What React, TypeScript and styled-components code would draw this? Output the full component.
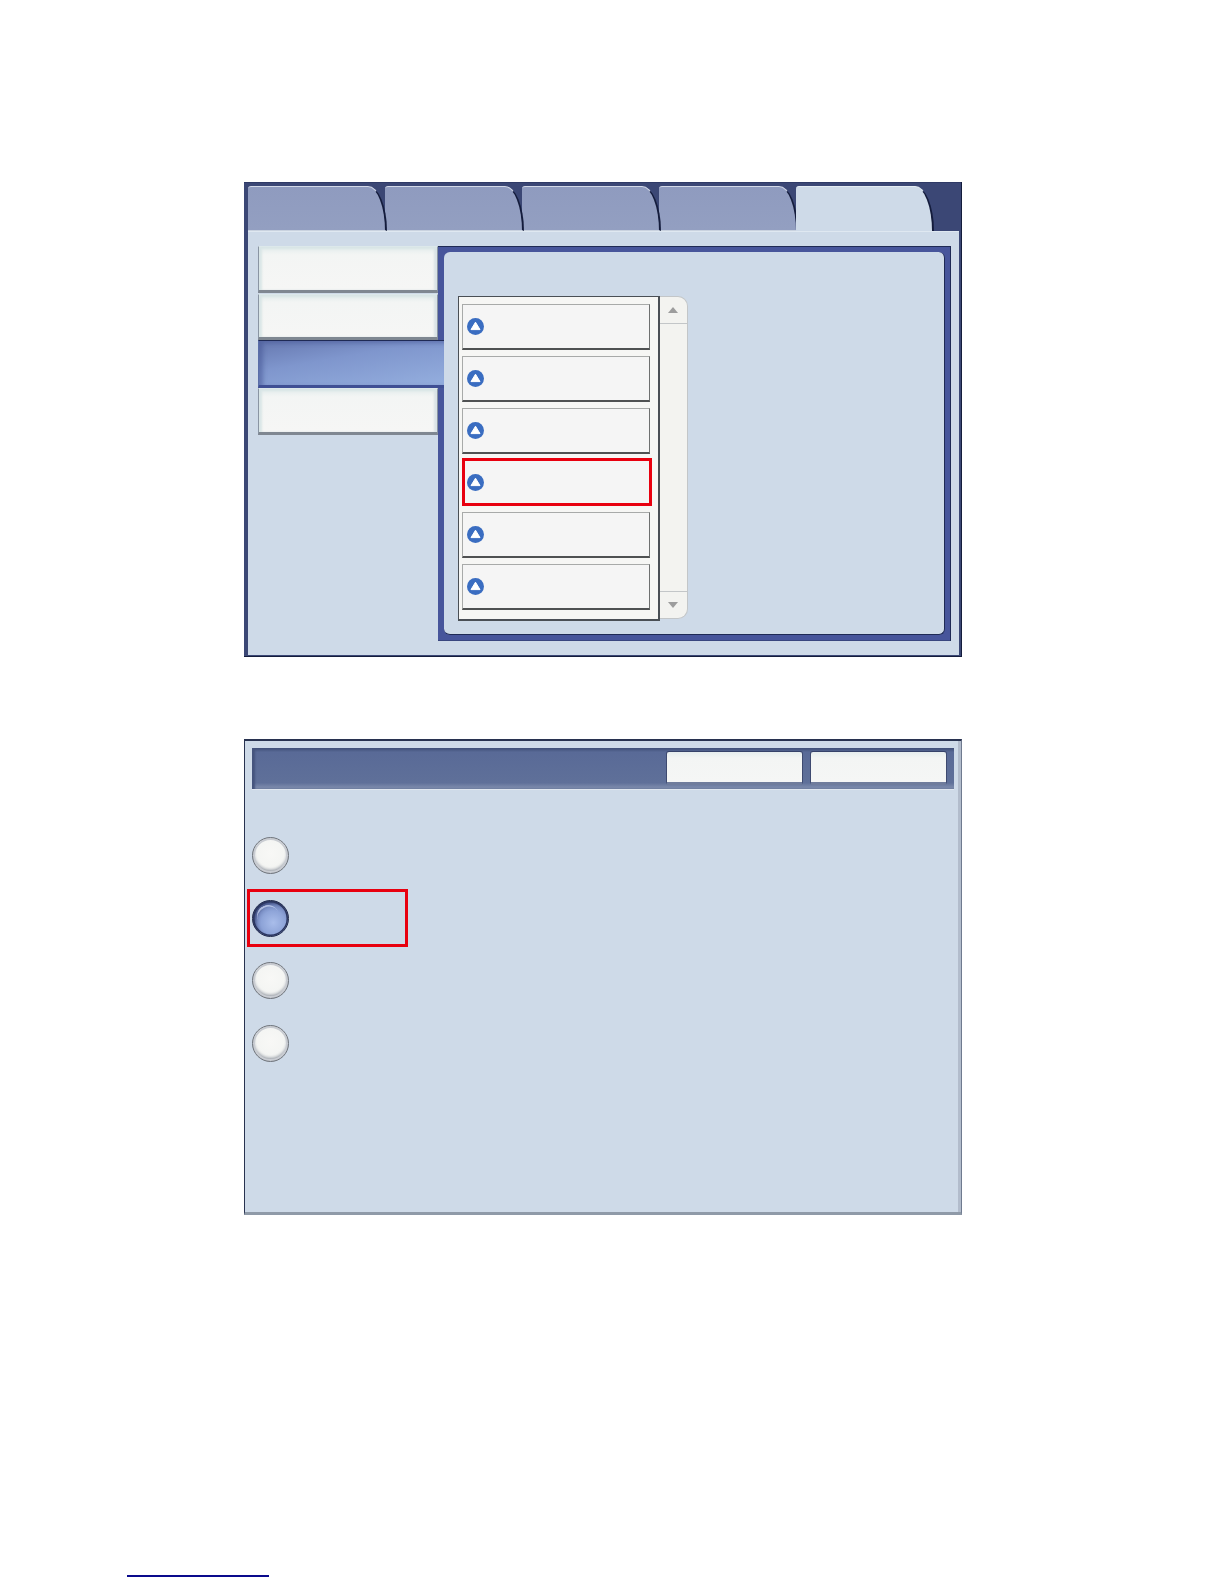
import styled, { createGlobalStyle } from 'styled-components';

const GlobalStyle = createGlobalStyle`
  html, body {
    margin: 0;
    padding: 0;
    background: #fff;
    font-family: "Liberation Sans", Arial, sans-serif;
  }
  *, *::before, *::after {
    box-sizing: border-box;
  }
`;

const Page = styled.div`
  width: 1224px;
  height: 1584px;
  padding-top: 182px;
  overflow: hidden;
`;

const TabbedPanel = styled.section`
  width: 718px;
  height: 475px;
  margin-left: 244px;
  padding: 4px 3px 2px 4px;
  display: flex;
  flex-direction: column;
  background: #3b4775;
  box-shadow: inset 0 -1px 0 #141c3c, inset -1px 0 0 #141c3c, inset 0 1px 0 #2f3a66;
`;

const TabRow = styled.div`
  flex: none;
  height: 45px;
  display: flex;
`;

const Tab = styled.div<{ $active?: boolean; $order: number }>`
  position: relative;
  z-index: ${(props) => props.$order};
  flex: none;
  width: ${(props) => (props.$active ? '138px' : '138.5px')};
  margin-left: ${(props) => (props.$active ? '-0.5px' : '0')};
  margin-right: ${(props) => (props.$active ? '0' : '-1.5px')};
  border-radius: 3px 19px 0 0 / 3px 45px 0 0;
  border-top: 1px solid ${(props) => (props.$active ? '#e4ecf3' : '#d3d9e8')};
  border-right: 2px solid #141c3c;
  border-bottom: ${(props) => (props.$active ? '0' : '1px solid #c9d2df')};
  background: ${(props) =>
    props.$active ? '#cedae8' : 'linear-gradient(#8f9bbf, #939fc1)'};
`;

const TabBody = styled.div`
  flex: 1;
  display: flex;
  padding: 15px 8px 14px 10px;
  background: #cedae8;
  box-shadow: inset 0 1px 0 #dfe8f1;
`;

const SideMenu = styled.div`
  width: 180px;
  display: flex;
  flex-direction: column;
`;

const SideButton = styled.div<{ $selected?: boolean }>`
  position: relative;
  z-index: 1;
  flex: none;
  width: ${(props) => (props.$selected ? '186px' : '180px')};
  height: ${(props) => (props.$selected ? '48px' : '46.5px')};
  margin-top: ${(props) => (props.$selected ? '-1px' : '0')};
  margin-bottom: ${(props) => (props.$selected ? '0' : '1px')};
  border-top: 1px solid ${(props) => (props.$selected ? '#1f2a55' : '#dce8ea')};
  border-left: 1px solid ${(props) => (props.$selected ? '#5a6ea8' : '#8a95a3')};
  border-right: ${(props) => (props.$selected ? '0' : '1px solid #8a95a3')};
  border-bottom: ${(props) => (props.$selected ? '3px solid #3f4f94' : '3px solid #7f8791')};
  background: ${(props) =>
    props.$selected
      ? 'linear-gradient(170deg, #6678b0 0%, #7f96cd 40%, #94aede 100%)'
      : 'linear-gradient(#e3ecec, #f3f5f4 18%, #f6f6f5)'};
  box-shadow: ${(props) =>
    props.$selected
      ? 'inset 4px 2px 4px rgba(70, 85, 150, 0.55)'
      : 'inset 3px 2px 2px rgba(215, 228, 230, 0.9), inset -3px 0 2px rgba(215, 225, 228, 0.9)'};
`;

const ContentPanel = styled.div`
  width: 513px;
  height: 395px;
  padding: 6px;
  background: #47559b;
  box-shadow: inset 0 1px 0 #1f2a55, inset -1px 0 0 #1f2a55, inset 0 -1px 0 #39467f;
`;

const ContentInner = styled.div`
  height: 100%;
  display: flex;
  align-items: flex-start;
  padding: 44px 0 0 14px;
  background: #cedae8;
  border: 1px solid #1f2a55;
  border-width: 0 1px 1px 0;
  border-radius: 6px;
`;

const ScrollList = styled.div`
  width: 201.5px;
  height: 325px;
  padding: 7px 7px 0 3px;
  display: flex;
  flex-direction: column;
  gap: 6px;
  background: #f6f6f4;
  border: 1px solid #4a4f55;
  border-bottom-width: 2px;
  border-right-width: 2px;
`;

const ListItem = styled.div<{ $marked?: boolean }>`
  flex: none;
  display: flex;
  align-items: center;
  width: ${(props) => (props.$marked ? '190px' : '188px')};
  height: ${(props) => (props.$marked ? '48px' : '46px')};
  margin-top: ${(props) => (props.$marked ? '-2px' : '0')};
  padding-left: ${(props) => (props.$marked ? '1.5px' : '3.5px')};
  background: #f5f5f5;
  border-style: solid;
  border-color: ${(props) =>
    props.$marked ? '#e8000f' : '#a8aaa9 #6e7070 #4f5152 #a8aaa9'};
  border-width: ${(props) => (props.$marked ? '3px' : '1px 1px 2px 1px')};
`;

const ScrollTrack = styled.div`
  width: 28px;
  height: 323px;
  display: flex;
  flex-direction: column;
  justify-content: space-between;
  background: #f3f3f0;
  border: 1px solid #c3c6c8;
  border-left: 0;
  border-radius: 0 10px 10px 0;
`;

const ScrollButton = styled.div<{ $down?: boolean }>`
  height: 27px;
  display: flex;
  align-items: center;
  justify-content: center;
  border-top: ${(props) => (props.$down ? '1px solid #c3c6c8' : '0')};
  border-bottom: ${(props) => (props.$down ? '0' : '1px solid #c3c6c8')};
`;

const Arrow = styled.span<{ $down?: boolean }>`
  width: 0;
  height: 0;
  border-left: 5px solid transparent;
  border-right: 5px solid transparent;
  border-bottom: ${(props) => (props.$down ? '0' : '6px solid #9d9d9d')};
  border-top: ${(props) => (props.$down ? '6px solid #9d9d9d' : '0')};
`;

const OptionsPanel = styled.section`
  width: 718px;
  height: 476px;
  margin: 82px 0 0 244px;
  padding: 7px 7px 0 7px;
  background: #cedae8;
  border-top: 2px solid #283250;
  border-left: 1px solid #283250;
  border-right: 1px solid #6f7a8f;
  border-bottom: 3px solid #8f9aa8;
  box-shadow: inset -3px 0 0 #b2bccc;
`;

const HeaderBar = styled.div`
  height: 41px;
  display: flex;
  justify-content: flex-end;
  gap: 7px;
  padding: 3px 7px 0 0;
  background: linear-gradient(#3f4e76, #596a97 10%, #5f7099 85%, #8593b2);
  box-shadow: inset 3px 0 2px #46557e, 0 1px 0 #dfe6ef;
`;

const HeaderButton = styled.div`
  width: 137px;
  height: 34px;
  background: linear-gradient(#e6edee, #f3f5f4 20%, #f5f6f5);
  border: 1px solid #3e4a70;
  border-top-color: #36426a;
  border-bottom: 3px solid #6f7c9c;
  border-radius: 3px;
`;

const OptionList = styled.div`
  display: flex;
  flex-direction: column;
  gap: 25.7px;
  padding-top: 48px;
`;

const OptionRow = styled.div<{ $marked?: boolean }>`
  position: relative;
  height: 37px;
  &::after {
    content: ${(props) => (props.$marked ? '""' : 'none')};
    position: absolute;
    top: -11px;
    left: -5px;
    width: 161px;
    height: 58px;
    border: 3px solid #e8000f;
  }
`;

const Radio = styled.div<{ $on?: boolean }>`
  position: relative;
  width: 37px;
  height: 37px;
  border-radius: 50%;
  border: 1px solid ${(props) => (props.$on ? '#1f2849' : '#6f747b')};
  background: ${(props) =>
    props.$on
      ? 'radial-gradient(circle at 58% 62%, #a9bdea 0%, #8ea4d8 40%, #6477b0 72%, #3a4778 100%)'
      : 'radial-gradient(circle at 50% 44%, #f8f8f6 0%, #f4f5f3 52%, #d9dde2 72%, #9a9fa8 100%)'};
  box-shadow: ${(props) =>
    props.$on
      ? 'inset 0 0 0 1.5px #2c3760, inset 3px 3px 3px rgba(30, 40, 85, 0.5)'
      : 'inset 0 0 0 2px #c9ccd2, inset 0 -3px 3px rgba(90, 95, 105, 0.5)'};
  &::before {
    content: ${(props) => (props.$on ? '""' : 'none')};
    position: absolute;
    top: 4px;
    left: 4px;
    width: 22px;
    height: 22px;
    border-radius: 50%;
    border-top: 2px solid rgba(205, 218, 245, 0.75);
    transform: rotate(-25deg);
  }
`;

const FooterRule = styled.div`
  width: 142px;
  height: 2px;
  margin: 360px 0 0 127px;
  background: #0a0a8c;
`;

function UpIcon() {
  return (
    <svg width="17" height="17" viewBox="0 0 17 17">
      <circle cx="8.5" cy="8.5" r="8.5" fill="#3a6dc1" />
      <path
        d="M8.5 4.2 L13 11.6 H4 Z"
        fill="#fff"
        stroke="#fff"
        strokeWidth="1"
        strokeLinejoin="round"
      />
    </svg>
  );
}

const tabs = ['a', 'b', 'c', 'd'];
const sideButtons = [false, false, true, false];
const listItems = [false, false, false, true, false, false];
const options = [false, true, false, false];

function App() {
  return (
    <Page>
      <GlobalStyle />
      <TabbedPanel>
        <TabRow>
          {tabs.map((tab, i) => (
            <Tab key={tab} $order={5 - i} />
          ))}
          <Tab $active $order={6} />
        </TabRow>
        <TabBody>
          <SideMenu>
            {sideButtons.map((selected, i) => (
              <SideButton key={i} $selected={selected} />
            ))}
          </SideMenu>
          <ContentPanel>
            <ContentInner>
              <ScrollList>
                {listItems.map((marked, i) => (
                  <ListItem key={i} $marked={marked}>
                    <UpIcon />
                  </ListItem>
                ))}
              </ScrollList>
              <ScrollTrack>
                <ScrollButton>
                  <Arrow />
                </ScrollButton>
                <ScrollButton $down>
                  <Arrow $down />
                </ScrollButton>
              </ScrollTrack>
            </ContentInner>
          </ContentPanel>
        </TabBody>
      </TabbedPanel>

      <OptionsPanel>
        <HeaderBar>
          <HeaderButton />
          <HeaderButton />
        </HeaderBar>
        <OptionList>
          {options.map((on, i) => (
            <OptionRow key={i} $marked={on}>
              <Radio $on={on} />
            </OptionRow>
          ))}
        </OptionList>
      </OptionsPanel>

      <FooterRule />
    </Page>
  );
}

export default App;
